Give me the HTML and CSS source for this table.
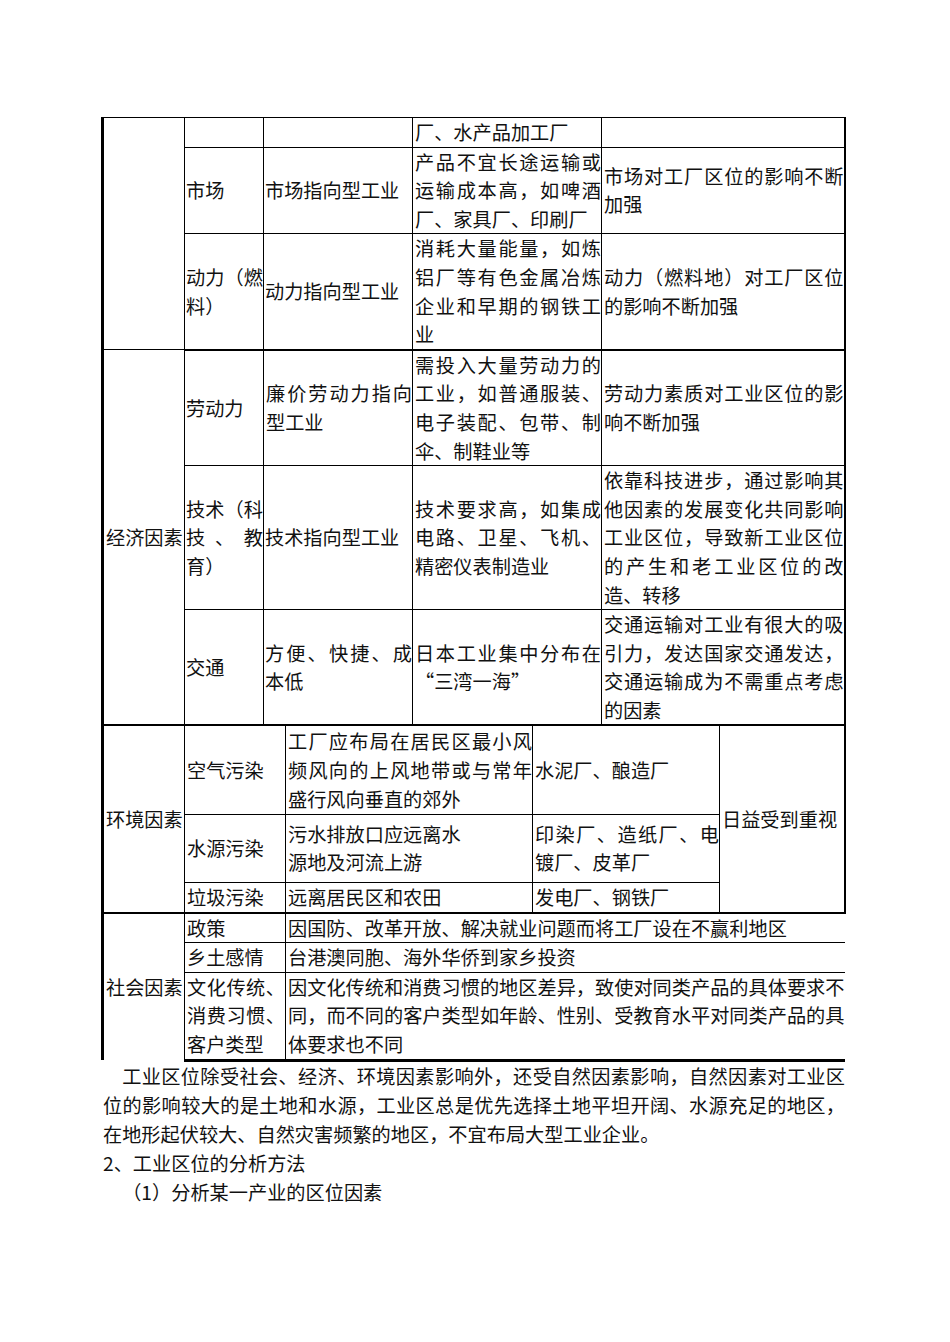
FILE: index.html
```html
<!DOCTYPE html>
<html lang="zh-CN">
<head>
<meta charset="utf-8">
<title>工业区位因素</title>
<link rel="stylesheet" href="styles.css">
</head>
<body>
<div class="page">
  <table class="tbl t-top">
    <colgroup>
      <col class="w82"><col class="w79"><col class="w149"><col class="w189"><col class="w243">
    </colgroup>
    <tr>
      <td rowspan="3" class="cat"></td>
      <td></td>
      <td></td>
      <td>厂、水产品加工厂</td>
      <td></td>
    </tr>
    <tr>
      <td>市场</td>
      <td>市场指向型工业</td>
      <td>产品不宜长途运输或运输成本高，如啤酒厂、家具厂、印刷厂</td>
      <td>市场对工厂区位的影响不断加强</td>
    </tr>
    <tr class="sec-end">
      <td>动力（燃料）</td>
      <td>动力指向型工业</td>
      <td>消耗大量能量，如炼铝厂等有色金属冶炼企业和早期的钢铁工业</td>
      <td>动力（燃料地）对工厂区位的影响不断加强</td>
    </tr>
    <tr>
      <td rowspan="3" class="cat">经济因素</td>
      <td>劳动力</td>
      <td>廉价劳动力指向型工业</td>
      <td>需投入大量劳动力的工业，如普通服装、电子装配、包带、制伞、制鞋业等</td>
      <td>劳动力素质对工业区位的影响不断加强</td>
    </tr>
    <tr>
      <td>技术（科技、教育）</td>
      <td>技术指向型工业</td>
      <td>技术要求高，如集成电路、卫星、飞机、精密仪表制造业</td>
      <td>依靠科技进步，通过影响其他因素的发展变化共同影响工业区位，导致新工业区位的产生和老工业区位的改造、转移</td>
    </tr>
    <tr class="last">
      <td>交通</td>
      <td>方便、快捷、成本低</td>
      <td>日本工业集中分布在“三湾一海”</td>
      <td>交通运输对工业有很大的吸引力，发达国家交通发达，交通运输成为不需重点考虑的因素</td>
    </tr>
  </table>

  <table class="tbl t-env">
    <colgroup>
      <col class="w82"><col class="w101"><col class="w247"><col class="w187"><col class="w125">
    </colgroup>
    <tr class="first h-air">
      <td rowspan="3" class="cat">环境因素</td>
      <td>空气污染</td>
      <td>工厂应布局在居民区最小风频风向的上风地带或与常年盛行风向垂直的郊外</td>
      <td>水泥厂、酿造厂</td>
      <td rowspan="3" class="note">日益受到重视</td>
    </tr>
    <tr class="h-water">
      <td>水源污染</td>
      <td>污水排放口应远离水<br>源地及河流上游</td>
      <td>印染厂、造纸厂、电镀厂、皮革厂</td>
    </tr>
    <tr class="last h-waste">
      <td>垃圾污染</td>
      <td>远离居民区和农田</td>
      <td>发电厂、钢铁厂</td>
    </tr>
  </table>

  <table class="tbl t-soc">
    <colgroup>
      <col class="w82"><col class="w101"><col class="w559">
    </colgroup>
    <tr class="first">
      <td rowspan="3" class="cat open-bottom">社会因素</td>
      <td>政策</td>
      <td>因国防、改革开放、解决就业问题而将工厂设在不赢利地区</td>
    </tr>
    <tr>
      <td>乡土感情</td>
      <td>台港澳同胞、海外华侨到家乡投资</td>
    </tr>
    <tr class="last">
      <td>文化传统、消费习惯、客户类型</td>
      <td>因文化传统和消费习惯的地区差异，致使对同类产品的具体要求不同，而不同的客户类型如年龄、性别、受教育水平对同类产品的具体要求也不同</td>
    </tr>
  </table>

  <p class="text indent">工业区位除受社会、经济、环境因素影响外，还受自然因素影响，自然因素对工业区位的影响较大的是土地和水源，工业区总是优先选择土地平坦开阔、水源充足的地区，在地形起伏较大、自然灾害频繁的地区，不宜布局大型工业企业。</p>
  <p class="text">2、工业区位的分析方法</p>
  <p class="text indent">（1）分析某一产业的区位因素</p>
</div>
</body>
</html>
```

FILE: styles.css
```css
html, body {
  margin: 0;
  padding: 0;
  background: #ffffff;
}

body {
  color: #111111;
  font-family: "Noto Sans CJK SC", "Noto Sans CJK JP", sans-serif;
  font-size: 19.2px;
}

.page {
  padding: 117px 0 0 101px;
  width: 744px;
}

.tbl {
  border-collapse: collapse;
  table-layout: fixed;
  width: 742px;
}

.tbl td {
  border: 1px solid #000;
  padding: 0 0 0 2px;
  line-height: 28.6px;
  text-align: justify;
  vertical-align: middle;
}

.w82 { width: 82px; }
.w79 { width: 79px; }
.w149 { width: 149px; }
.w189 { width: 189px; }
.w243 { width: 243px; }
.w101 { width: 101px; }
.w247 { width: 247px; }
.w187 { width: 187px; }
.w125 { width: 125px; }
.w559 { width: 559px; }

/* the narrow factor column needs every pixel for four characters */
.t-top td:nth-child(2),
.t-top tr:not(:first-child) td:first-child:not(.cat) {
  padding-left: 1px;
}

/* outer left / right edges */
.tbl td:first-child.cat {
  border-left: 3px solid #000;
  padding-left: 2px;
}

.t-top td:last-child,
.t-env td.note {
  border-right: 2px solid #000;
}

/* section separators */
.t-top .sec-end td {
  border-bottom: 2px solid #000;
}

.t-top tr.last td,
.t-top tr:nth-child(4) td.cat {
  border-bottom: 2px solid #000;
}

.t-env tr.first td {
  border-top: none;
}

.t-env tr.last td,
.t-env td.cat,
.t-env td.note {
  border-bottom: 2px solid #000;
}

.t-env .h-air { height: 88px; }
.t-env .h-water { height: 68px; }
.t-env .h-waste { height: 30px; }

.t-env td.note {
  text-align: left;
}

.t-soc tr.first td {
  border-top: none;
}

.t-soc td:last-child {
  border-right: none;
}

.t-soc td.open-bottom {
  border-bottom: none;
}

.t-soc tr.last td:not(.cat) {
  border-bottom: 3px solid #000;
}

/* body text */
.text {
  margin: 0 0 0 2px;
  width: 742px;
  line-height: 29px;
  text-align: justify;
}

.indent {
  text-indent: 1em;
}
```
